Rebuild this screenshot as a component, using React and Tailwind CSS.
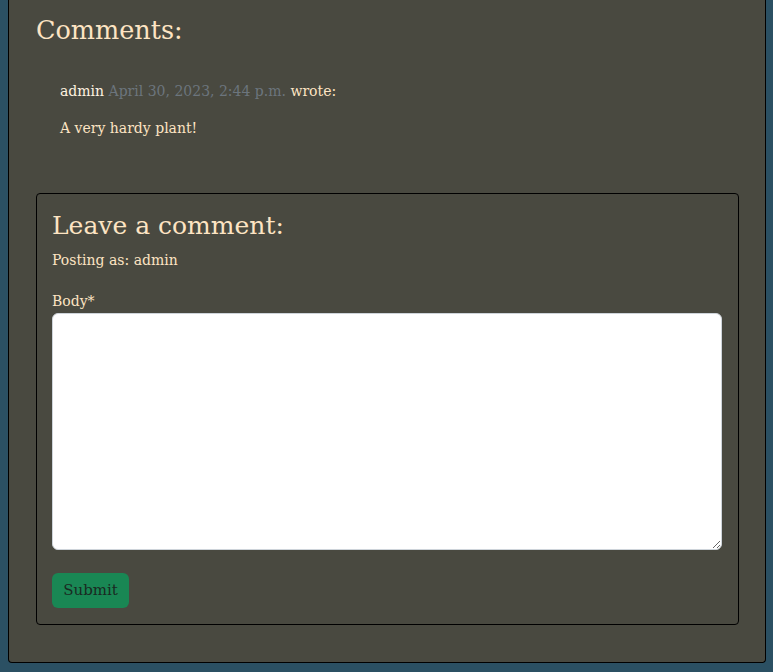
import React from "react";

export default function App() {
  return (
    <div className="min-h-[672px] bg-[#2b5063] pl-2 pr-[7px] pb-2 font-['DejaVu_Serif',serif] text-[#fde4c3]">
      <div className="border border-t-0 border-black rounded-b-[4px] bg-[#494940] pl-[27px] pr-[26px] pt-[15px] pb-[37px]">
        <h3 className="text-[25.5px] leading-[31px]">Comments:</h3>
        <div className="mt-[35px] pl-[24px] text-[14px]">
          <p className="leading-[20px]">
            <span className="text-[#fff3e0]">admin</span> <span className="text-[#6c757d]">April 30, 2023, 2:44 p.m.</span> wrote:
          </p>
          <p className="mt-[17px] leading-[20px]">A very hardy plant!</p>
        </div>
        <div className="mt-[55px] border border-black rounded-[4px] pl-[15px] pr-[16px] pt-[16px] pb-[16px]">
          <h3 className="text-[25px] leading-[31px]">Leave a comment:</h3>
          <p className="mt-[9px] text-[14px] leading-[20px]">Posting as: admin</p>
          <form className="mt-[21px]" onSubmit={(e) => e.preventDefault()}>
            <label className="block text-[14px] leading-[20px]">Body*</label>
            <textarea className="mt-[2px] block w-full h-[237px] bg-white border border-[#ced4da] rounded-[6px]" />
            <button type="submit" className="mt-[23px] h-[35px] w-[77px] rounded-[6px] bg-[#198754] text-[#1a2a22] text-[15px]">
              Submit
            </button>
          </form>
        </div>
      </div>
    </div>
  );
}
